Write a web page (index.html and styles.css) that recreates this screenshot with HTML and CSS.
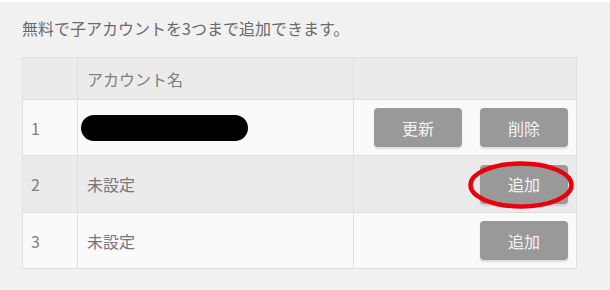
FILE: index.html
```html
<!DOCTYPE html>
<html lang="ja">
<head>
<meta charset="utf-8">
<title>子アカウント</title>
<link rel="stylesheet" href="styles.css">
</head>
<body>
<div class="page">
  <p class="note">無料で子アカウントを3つまで追加できます。</p>
  <table class="accounts">
    <colgroup>
      <col class="c-num"><col class="c-name"><col class="c-act">
    </colgroup>
    <thead>
      <tr><th></th><th>アカウント名</th><th></th></tr>
    </thead>
    <tbody>
      <tr class="odd">
        <td class="num">1</td>
        <td><span class="redact"></span></td>
        <td class="act"><div class="btns"><button class="btn">更新</button><button class="btn">削除</button></div></td>
      </tr>
      <tr class="even tall">
        <td class="num">2</td>
        <td>未設定</td>
        <td class="act"><div class="btns"><span class="mark"><button class="btn">追加</button><svg class="circle" viewBox="0 0 106 48" width="106" height="48"><ellipse cx="53" cy="24" rx="50.5" ry="21.5" fill="none" stroke="#e8000b" stroke-width="4.5"/></svg></span></div></td>
      </tr>
      <tr class="odd">
        <td class="num">3</td>
        <td>未設定</td>
        <td class="act"><div class="btns"><button class="btn">追加</button></div></td>
      </tr>
    </tbody>
  </table>
</div>
</body>
</html>
```
FILE: styles.css
```css
html, body {
  margin: 0;
  padding: 0;
}
body {
  background: #f1f1f1;
  border-top: 2px solid #ffffff;
  font-family: "Noto Sans CJK JP", "Noto Sans", sans-serif;
  color: #777;
  height: 288px;
  overflow: hidden;
}
.page {
  padding: 14px 0 0 22px;
}
.note {
  margin: 0 0 17px;
  font-size: 16px;
  line-height: 24px;
  color: #6a6a6a;
}
.accounts {
  border-collapse: collapse;
  width: 554px;
  table-layout: fixed;
}
.c-num { width: 55px; }
.c-name { width: 276px; }
.c-act { width: 223px; }
.accounts th,
.accounts td {
  border: 1px solid #e0e0e0;
  font-size: 16px;
  font-weight: 400;
  text-align: left;
  color: #777;
  padding: 0 0 0 8px;
  vertical-align: middle;
}
.accounts th {
  background: #ebebeb;
  height: 41px;
  color: #808080;
}
.accounts th:nth-child(2),
.accounts td:nth-child(2) {
  padding-left: 9px;
}
.accounts td {
  height: 55px;
}
.accounts .tall td {
  height: 56px;
}
.odd td { background: #fafafa; }
.even td { background: #ebebeb; }
.accounts td.num {
  color: #808080;
}
.accounts td.act {
  padding: 0 8px 0 0;
}
.btns {
  display: flex;
  justify-content: flex-end;
  gap: 18px;
}
.btn {
  width: 88px;
  height: 39px;
  border: 0;
  border-radius: 4px;
  background: #999999;
  color: #f4f4f4;
  font-family: "Noto Sans CJK JP", "Noto Sans", sans-serif;
  font-size: 16px;
  padding: 0;
  box-shadow: 0 2px 2px rgba(0, 0, 0, 0.12);
}
.redact {
  display: inline-block;
  width: 167px;
  height: 26px;
  margin-left: -6px;
  border-radius: 13px;
  background: #000;
  vertical-align: middle;
}
.mark {
  position: relative;
  display: inline-block;
}
.circle {
  position: absolute;
  left: -12px;
  top: -4px;
  overflow: visible;
}
```
